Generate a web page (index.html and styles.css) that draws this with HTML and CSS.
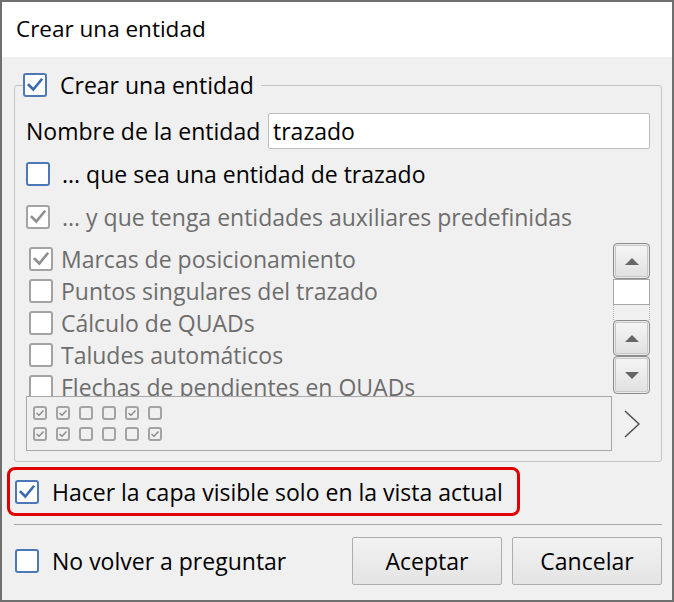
FILE: index.html
```html
<!DOCTYPE html>
<html lang="es">
<head>
<meta charset="utf-8">
<title>Crear una entidad</title>
<link rel="stylesheet" href="styles.css">
</head>
<body>
<div class="window">
  <div class="titlebar">Crear una entidad</div>
  <div class="content">
    <fieldset class="group">
      <legend class="legend">
        <span class="cb"><svg viewBox="0 0 20 20"><path d="M3.8 10 L8.3 14.5 L16.3 4.8"/></svg></span>
        <span>Crear una entidad</span>
      </legend>

      <div class="name-row">
        <span class="label">Nombre de la entidad</span>
        <div class="input">trazado</div>
      </div>

      <div class="row row-trazado">
        <span class="cb"></span>
        <span class="text">... que sea una entidad de trazado</span>
      </div>

      <div class="row row-aux dis">
        <span class="cb dis"><svg viewBox="0 0 20 20"><path d="M3.8 10 L8.3 14.5 L16.3 4.8"/></svg></span>
        <span class="text">... y que tenga entidades auxiliares predefinidas</span>
      </div>

      <div class="list-area">
        <div class="list">
          <div class="item"><span class="cb dis"><svg viewBox="0 0 20 20"><path d="M3.8 10 L8.3 14.5 L16.3 4.8"/></svg></span><span>Marcas de posicionamiento</span></div>
          <div class="item"><span class="cb dis"></span><span>Puntos singulares del trazado</span></div>
          <div class="item"><span class="cb dis"></span><span>Cálculo de QUADs</span></div>
          <div class="item"><span class="cb dis"></span><span>Taludes automáticos</span></div>
          <div class="item"><span class="cb dis"></span><span>Flechas de pendientes en QUADs</span></div>
        </div>
        <div class="scroll-col">
          <div class="sbtn"><span class="tri up"></span></div>
          <div class="thumb"></div>
          <div class="track"></div>
          <div class="sbtn"><span class="tri up"></span></div>
          <div class="sbtn sbtn-down"><span class="tri down"></span></div>
        </div>
      </div>

      <div class="mini-area">
        <div class="mini-box">
          <div class="mini-grid">
            <span class="mcb"><svg viewBox="0 0 14 14"><path d="M3.5 7 L6 9.3 L10.5 4.6"/></svg></span>
            <span class="mcb"><svg viewBox="0 0 14 14"><path d="M3.5 7 L6 9.3 L10.5 4.6"/></svg></span>
            <span class="mcb"></span>
            <span class="mcb"></span>
            <span class="mcb"><svg viewBox="0 0 14 14"><path d="M3.5 7 L6 9.3 L10.5 4.6"/></svg></span>
            <span class="mcb"></span>
            <span class="mcb"><svg viewBox="0 0 14 14"><path d="M3.5 7 L6 9.3 L10.5 4.6"/></svg></span>
            <span class="mcb"><svg viewBox="0 0 14 14"><path d="M3.5 7 L6 9.3 L10.5 4.6"/></svg></span>
            <span class="mcb"></span>
            <span class="mcb"></span>
            <span class="mcb"></span>
            <span class="mcb"><svg viewBox="0 0 14 14"><path d="M3.5 7 L6 9.3 L10.5 4.6"/></svg></span>
          </div>
        </div>
        <div class="chev"><svg viewBox="0 0 18 28" width="18" height="28"><path d="M2 1 L16 14 L2 27"/></svg></div>
      </div>
    </fieldset>

    <div class="highlight">
      <span class="cb"><svg viewBox="0 0 20 20"><path d="M3.8 10 L8.3 14.5 L16.3 4.8"/></svg></span>
      <span class="text">Hacer la capa visible solo en la vista actual</span>
    </div>

    <div class="sep"></div>

    <div class="footer">
      <div class="footer-check">
        <span class="cb"></span>
        <span class="text">No volver a preguntar</span>
      </div>
      <div class="buttons">
        <button class="btn" type="button">Aceptar</button>
        <button class="btn" type="button">Cancelar</button>
      </div>
    </div>
  </div>
</div>
</body>
</html>
```

FILE: styles.css
```css
* { box-sizing: border-box; }

html, body {
  margin: 0;
  padding: 0;
  background: #ffffff;
}

body {
  font-family: "Open Sans", "Noto Sans", "Liberation Sans", sans-serif;
  font-size: 23px;
  color: #000;
}

.window {
  width: 674px;
  height: 602px;
  border: 2px solid #6f6f6f;
  background: #f0f0f0;
  display: flex;
  flex-direction: column;
}

.titlebar {
  height: 55px;
  background: #ffffff;
  padding: 0 0 2px 14px;
  display: flex;
  align-items: center;
  font-size: 22.5px;
}

.content {
  display: flex;
  flex-direction: column;
}

/* group box */
.group {
  margin: 15px 0 0 12px;
  width: 648px;
  border: 1px solid #c4c4c4;
  border-radius: 3px;
  padding: 0 11px 10px 11px;
  min-width: 0;
}

.legend {
  margin-left: -3px;
  padding: 0 7px 0 0;
  height: 26px;
  display: flex;
  align-items: center;
  gap: 13px;
}

.cb {
  width: 24px;
  height: 24px;
  flex: none;
  border: 2px solid #4c79b5;
  border-radius: 3px;
  background: #ffffff;
  display: inline-flex;
}

.cb svg {
  width: 20px;
  height: 20px;
  fill: none;
  stroke: #3b6cb0;
  stroke-width: 2.6;
  stroke-linecap: square;
}

.cb.dis {
  border-color: #a3a3a3;
}

.cb.dis svg {
  stroke: #8f8f8f;
}

.name-row {
  margin-top: 15px;
  height: 36px;
  display: flex;
  align-items: center;
  justify-content: space-between;
}

.input {
  width: 382px;
  height: 36px;
  background: #ffffff;
  border: 1px solid #bdbdbd;
  border-radius: 2px;
  padding-left: 4px;
  display: flex;
  align-items: center;
}

.row {
  height: 32px;
  display: flex;
  align-items: center;
  gap: 12px;
}

.row-trazado { margin-top: 9px; }
.row-aux { margin-top: 11px; }

.dis, .list { color: #6d6d6d; }

/* list */
.list-area {
  margin-top: 10px;
  height: 153px;
  display: flex;
  justify-content: space-between;
}

.list {
  height: 153px;
  overflow: hidden;
  padding-left: 3px;
}

.item {
  height: 32px;
  display: flex;
  align-items: center;
  gap: 8px;
  white-space: nowrap;
}

.scroll-col {
  width: 37px;
  display: flex;
  flex-direction: column;
}

.sbtn {
  height: 36px;
  border: 1px solid #8c8c8c;
  border-radius: 4px;
  box-shadow: inset 0 0 0 1px #e9e9e9, inset 0 0 0 2px #c8c8c8;
  background: linear-gradient(#f6f6f6, #e0e0e0);
  display: flex;
  align-items: center;
  justify-content: center;
}

.sbtn-down { height: 38px; }

.tri {
  width: 0;
  height: 0;
  border-left: 7px solid transparent;
  border-right: 7px solid transparent;
}

.tri.up { border-bottom: 7px solid #666666; }
.tri.down { border-top: 7px solid #666666; }

.thumb {
  height: 26px;
  background: #ffffff;
  border: 1px solid #a8a8a8;
}

.track {
  height: 15px;
  border-left: 1px dotted #b5b5b5;
  border-right: 1px dotted #b5b5b5;
}

/* mini area */
.mini-area {
  height: 55px;
  display: flex;
}

.mini-box {
  width: 586px;
  height: 55px;
  border: 1px solid #a8a8a8;
  padding: 9px 0 0 6px;
}

.mini-grid {
  display: grid;
  grid-template-columns: repeat(6, 14px);
  column-gap: 9px;
  row-gap: 7px;
}

.mcb {
  width: 14px;
  height: 14px;
  border: 2px solid #a3a3a3;
  border-radius: 3px;
  display: inline-flex;
  align-items: center;
  justify-content: center;
}

.mcb svg {
  width: 14px;
  height: 14px;
  flex: none;
  margin: -2px;
  fill: none;
  stroke: #8a8a8a;
  stroke-width: 1.4;
}

.chev {
  flex: 1;
  display: flex;
  align-items: center;
  justify-content: center;
  padding-left: 2px;
}

.chev svg {
  fill: none;
  stroke: #4a4a4a;
  stroke-width: 1.4;
}

/* highlighted option */
.highlight {
  margin: 5px 0 0 5px;
  width: 513px;
  height: 49px;
  border: 3px solid #e00000;
  border-radius: 8px;
  padding-left: 5px;
  display: flex;
  align-items: center;
  gap: 13px;
}

.sep {
  margin: 8px 0 0 12px;
  width: 648px;
  height: 1px;
  background: #a9a9a9;
}

.footer {
  margin-top: 12px;
  padding: 0 10px 0 13px;
  height: 48px;
  display: flex;
  align-items: center;
  justify-content: space-between;
}

.footer-check {
  display: flex;
  align-items: center;
  gap: 13px;
}

.buttons {
  display: flex;
  gap: 10px;
}

.btn {
  width: 150px;
  height: 48px;
  font: inherit;
  color: #000;
  border: 1px solid #adadad;
  border-radius: 2px;
  background: linear-gradient(#f2f2f2, #e4e4e4);
  padding: 0;
}
```
